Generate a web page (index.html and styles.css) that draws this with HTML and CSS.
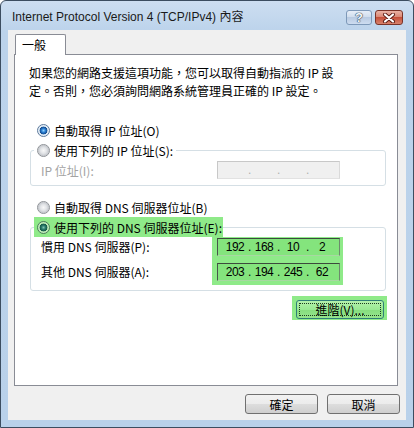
FILE: index.html
```html
<!DOCTYPE html>
<html lang="zh-Hant">
<head>
    <meta charset="UTF-8">
    <title>Internet Protocol Version 4 (TCP/IPv4) 內容</title>
    <link rel="stylesheet" href="styles.css">
</head>
<body>
    <div class="window">
        <!-- Title bar -->
        <div class="titlebar">
            <span class="title">Internet Protocol Version 4 (TCP/IPv4) 內容</span>
            <div class="caption-btns">
                <button class="cap-btn help">?</button>
                <button class="cap-btn close">
                    <svg width="14" height="10" viewBox="0 0 14 10">
                        <path d="M3 1.5 L11 8.5 M11 1.5 L3 8.5" stroke="#5a1a12" stroke-width="4" stroke-linecap="round"/>
                        <path d="M3 1.5 L11 8.5 M11 1.5 L3 8.5" stroke="#fff" stroke-width="2.2" stroke-linecap="round"/>
                    </svg>
                </button>
            </div>
        </div>

        <div class="client">
            <!-- Tabs -->
            <div class="tabs">
                <div class="tab">一般</div>
            </div>

            <div class="panel">
                <p class="intro">如果您的網路支援這項功能，您可以取得自動指派的 IP 設<br>定。否則，您必須詢問網路系統管理員正確的 IP 設定。</p>

                <div class="radio-row first">
                    <span class="radio checked"></span>自動取得 IP 位址(O)
                </div>

                <fieldset class="group">
                    <legend><span class="radio-label"><span class="radio"></span>使用下列的 IP 位址(S):</span></legend>
                    <div class="field-row disabled">
                        <span class="field-label">IP 位址(I):</span>
                        <div class="ip-box off">
                            <span class="seg"></span><span class="dot">.</span>
                            <span class="seg"></span><span class="dot">.</span>
                            <span class="seg"></span><span class="dot">.</span>
                            <span class="seg"></span>
                        </div>
                    </div>
                </fieldset>

                <div class="radio-row gap">
                    <span class="radio"></span>自動取得 DNS 伺服器位址(B)
                </div>

                <fieldset class="group dns">
                    <legend class="hl"><span class="radio-label"><span class="radio checked green"></span>使用下列的 DNS 伺服器位址(E):</span></legend>
                    <div class="dns-grid">
                        <div class="dns-labels">
                            <span>慣用 DNS 伺服器(P):</span>
                            <span>其他 DNS 伺服器(A):</span>
                        </div>
                        <div class="hl dns-boxes">
                            <div class="ip-box">
                                <span class="seg">192</span><span class="dot">.</span>
                                <span class="seg">168</span><span class="dot">.</span>
                                <span class="seg">10</span><span class="dot">.</span>
                                <span class="seg">2</span>
                            </div>
                            <div class="ip-box">
                                <span class="seg">203</span><span class="dot">.</span>
                                <span class="seg">194</span><span class="dot">.</span>
                                <span class="seg">245</span><span class="dot">.</span>
                                <span class="seg">62</span>
                            </div>
                        </div>
                    </div>
                </fieldset>

                <div class="advanced-row">
                    <div class="hl adv-wrap">
                        <button class="btn advanced"><span class="focus">進階(V)...</span></button>
                    </div>
                </div>
            </div>

            <!-- Dialog buttons -->
            <div class="dialog-btns">
                <button class="btn">確定</button>
                <button class="btn">取消</button>
            </div>
        </div>
    </div>
</body>
</html>
```

FILE: styles.css
```css
* {
    box-sizing: border-box;
    margin: 0;
    padding: 0;
}
body {
    width: 414px;
    height: 428px;
    overflow: hidden;
    font-family: "Noto Sans CJK TC", sans-serif;
    font-size: 12px;
    color: #000;
    background-color: #fff;
}
.window {
    display: flex;
    flex-direction: column;
    height: 428px;
    padding: 0 7px 7px;
    border: 1px solid #3c4d60;
    border-radius: 6px 6px 0 0;
    background: linear-gradient(#cddef1, #bcd3eb 30px, #b9d1ea);
}
.titlebar {
    display: flex;
    align-items: flex-start;
    height: 29px;
    padding-left: 4px;
}
.title {
    margin-top: 8px;
    font-family: "Liberation Sans", "Noto Sans CJK TC", sans-serif;
    font-size: 12px;
    line-height: 16px;
    color: #1a1a1a;
}
.caption-btns {
    display: flex;
    gap: 3px;
    margin: 9px 3px 0 auto;
}
.cap-btn {
    display: flex;
    align-items: center;
    justify-content: center;
    height: 15px;
    border-radius: 3px;
    font-family: "Liberation Sans", sans-serif;
}
.cap-btn.help {
    width: 26px;
    border: 1px solid #7d98b8;
    background: linear-gradient(#e7eef8, #cfdcec 50%, #b9cbe2 50%, #cddcf0);
    color: #f4f8fc;
    font-size: 13px;
    font-weight: bold;
    line-height: 13px;
    text-shadow: 0 0 1px #2d3f55, 0 0 1px #2d3f55, 0 0 1px #2d3f55;
}
.cap-btn.close {
    width: 28px;
    border: 1px solid #7a3328;
    background: linear-gradient(#eab2a4, #d88471 50%, #c5503a 50%, #d8826c);
}

/* client area */
.client {
    flex: 1;
    display: flex;
    flex-direction: column;
    padding: 4px 6px 6px 6px;
    background-color: #f0f0f0;
}
.tabs {
    display: flex;
    padding-left: 1px;
}
.tab {
    position: relative;
    z-index: 1;
    width: 51px;
    height: 21px;
    margin-bottom: -1px;
    padding-left: 6px;
    border: 1px solid #898c95;
    border-bottom: none;
    border-radius: 2px 2px 0 0;
    background-color: #fff;
    line-height: 19px;
}
.panel {
    height: 332px;
    margin-right: 2px;
    padding: 9px 11px 0 14px;
    border: 1px solid #898c95;
    background-color: #fff;
}
.intro {
    line-height: 17.5px;
    white-space: nowrap;
}

/* radio buttons */
.radio-row, .radio-label {
    display: flex;
    align-items: center;
    gap: 4px;
    height: 20px;
    white-space: nowrap;
}
.radio-row {
    padding-left: 8px;
}
.radio-row.first {
    margin-top: 21px;
}
.radio-row.gap {
    margin-top: 11px;
}
.radio {
    flex: none;
    width: 13px;
    height: 13px;
    border: 1px solid #8e9297;
    border-radius: 50%;
    background: radial-gradient(circle, #f8f8f8 0, #e2e4e7 3px, #c9ccd1 5px, #f2f2f2 6px);
}
.radio.checked {
    border-color: #5d7a9c;
    background: radial-gradient(circle, #8fd3ff 0, #2a7dd0 2px, #144d8f 3.6px, #d8e6f3 4.2px, #f5f8fb 6px);
}
.radio.checked.green {
    border-color: #4d7a5c;
    background: radial-gradient(circle, #7ec3b0 0, #2a7a6a 2px, #145a4a 3.6px, #b8e8b2 4.2px, #c8f2c2 6px);
}

/* group boxes */
.group {
    min-width: 0;
    margin-left: 1px;
    padding: 1px 0 6px 0;
    border: 1px solid #d5dfe5;
    border-radius: 3px;
}
.group legend {
    margin-left: 3px;
    padding: 0 3px;
    background-color: #fff;
}
.hl {
    background-color: #8fea89;
}
.group legend.hl {
    padding-right: 1px;
    background-color: #8fea89;
}
.field-row {
    display: flex;
    align-items: center;
    padding-left: 10px;
}
.field-label {
    width: 176px;
}
.disabled {
    color: #a3a3a3;
}
.ip-box {
    display: flex;
    align-items: center;
    width: 123px;
    height: 18px;
    padding-left: 5px;
    border: 1px solid;
    border-color: #3c4a3c #6d8a6d #a8d8a2 #46564a;
    background-color: #84e47d;
    font-family: "Liberation Sans", sans-serif;
    font-size: 12px;
    letter-spacing: -0.5px;
}
.ip-box.off {
    border-color: #c8c8c8 #dadada #e2e2e2 #c8c8c8;
    background-color: #f0f0f0;
    color: #b0b0b0;
}
.seg {
    width: 24px;
    text-align: center;
}
.dot {
    width: 5px;
    text-align: center;
}
.dns {
    padding: 0 0 5px 0;
}
.dns-grid {
    display: flex;
    padding-left: 10px;
}
.dns-labels {
    display: flex;
    flex-direction: column;
    gap: 7px;
    width: 171px;
    padding-top: 1px;
}
.dns-labels span {
    line-height: 18px;
    white-space: nowrap;
}
.dns-boxes {
    display: flex;
    flex-direction: column;
    gap: 7px;
    padding: 1px 3px 4px 5px;
}

/* buttons */
.btn {
    width: 73px;
    height: 20px;
    border: 1px solid #707070;
    border-radius: 3px;
    background: linear-gradient(#f2f2f2, #ebebeb 50%, #dddddd 50%, #cfcfcf);
    font-family: "Noto Sans CJK TC", sans-serif;
    font-size: 12px;
    color: #000;
}
.advanced-row {
    display: flex;
    justify-content: flex-end;
    margin: 5px -1px 0 0;
}
.adv-wrap {
    padding: 4px 3px 1px 4px;
}
.btn.advanced {
    display: flex;
    align-items: center;
    justify-content: center;
    width: 88px;
    height: 19px;
    padding: 2px;
    border-color: #2f7f78;
    background: linear-gradient(#b4f2ac, #9ae993 50%, #86de7e 50%, #95e58d);
}
.focus {
    display: flex;
    align-items: center;
    justify-content: center;
    width: 100%;
    height: 100%;
    border: 1px dotted #1e3a1e;
    line-height: 11px;
}
.dialog-btns {
    display: flex;
    justify-content: flex-end;
    gap: 9px;
    margin-top: 8px;
}
```
